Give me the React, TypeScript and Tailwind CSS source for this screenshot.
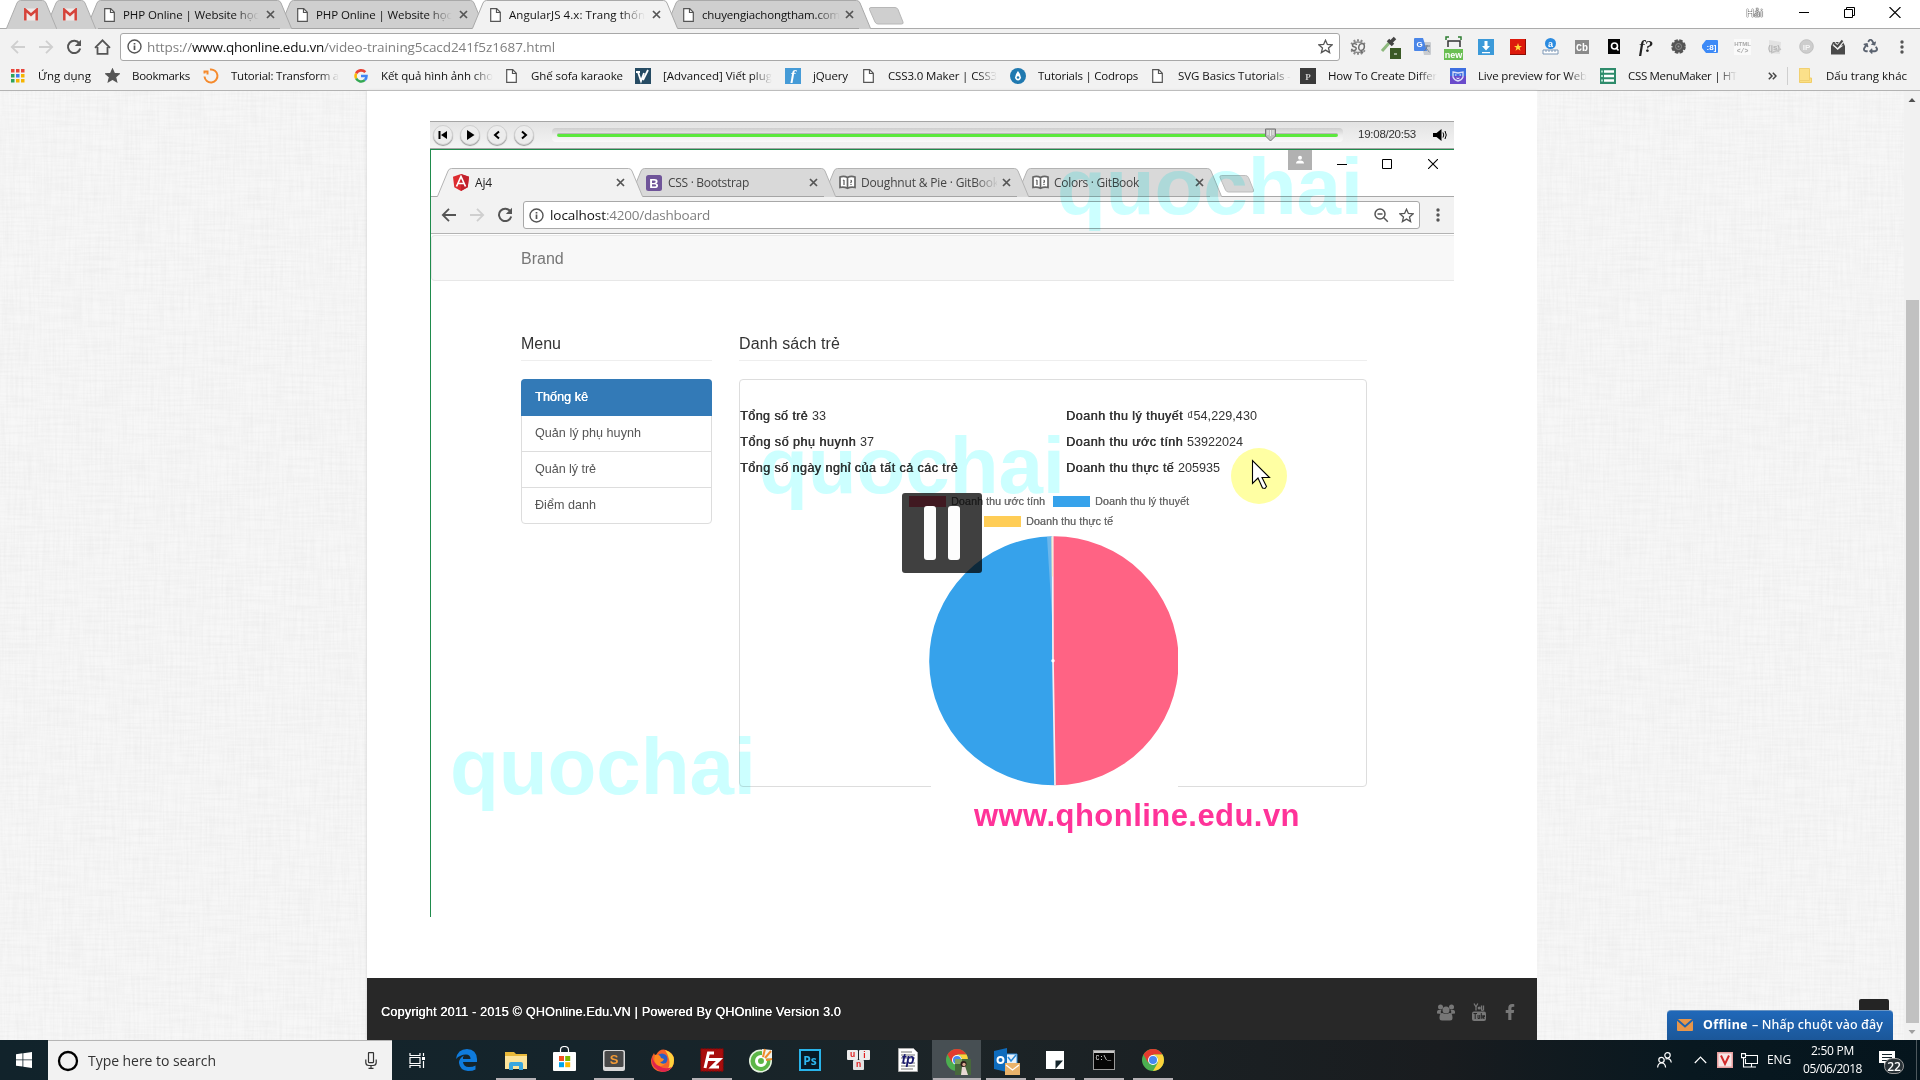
import React, { useLayoutEffect, useRef, useState } from "react";
import { FaFacebookF, FaRecycle } from "react-icons/fa";

/* Text run whose tracking is adjusted so that it fills a given width. */
function Fit({ w, className = "", children }: { w: number; className?: string; children: string }) {
  const ref = useRef<HTMLSpanElement>(null);
  const [ls, setLs] = useState(0);
  useLayoutEffect(() => {
    if (!ref.current) return;
    const natural = ref.current.getBoundingClientRect().width;
    setLs((w - natural) / Array.from(children).length);
  }, []);
  return (
    <span ref={ref} className={"inline-block shrink-0 whitespace-pre " + className} style={{ letterSpacing: ls }}>
      {children}
    </span>
  );
}

const ui = "font-['Open_Sans',sans-serif]";
const fade = "[mask-image:linear-gradient(to_right,black_82%,transparent)]";

function DocIcon() {
  return (
    <svg width="11" height="14" viewBox="0 0 11 14" fill="#fff" stroke="#555" strokeWidth="1.2" className="shrink-0">
      <path d="M.7.7h6l3.6 3.6v9H.7z" />
      <path d="M6.5.7v3.8h3.8" fill="none" />
    </svg>
  );
}
function Cross() {
  return (
    <svg width="9" height="9" viewBox="0 0 9 9" stroke="#555" strokeWidth="1.7" className="shrink-0">
      <path d="M1 1l7 7M8 1L1 8" />
    </svg>
  );
}
function Gmail() {
  return (
    <svg width="16" height="13" viewBox="0 0 16 13">
      <path d="M1 .5h14v12H1z" fill="#f0e9e7" />
      <path d="M2.300 12.500V1.800L8 6.800l5.700-5v10.700" fill="none" stroke="#d5433a" strokeWidth="2.500" />
    </svg>
  );
}

function TabShape({ w, fill, stroke }: { w: number; fill: string; stroke: string }) {
  return (
    <svg className="absolute inset-0" width={w} height="29" viewBox={`0 0 ${w} 29`}>
      <path d={`M.5 29V28.4L11 3Q12 .5 14.5 .5H${w - 14.5}Q${w - 12} .5 ${w - 11} 3L${w - 0.5} 28.4V29z`} fill={fill} />
      <path d={`M.5 28.4L11 3Q12 .5 14.5 .5H${w - 14.5}Q${w - 12} .5 ${w - 11} 3L${w - 0.5} 28.4`} fill="none" stroke={stroke} />
    </svg>
  );
}

function PinTab({ cls }: { cls: string }) {
  return (
    <div className={"relative flex h-[29px] w-[51px] shrink-0 items-center justify-center border-b border-[#a5a5a5] " + cls}>
      <TabShape w={51} fill="#cfcfcf" stroke="#adadad" />
      <div className="relative -ml-[2px]"><Gmail /></div>
    </div>
  );
}
function OuterTab({ cls, title, w, active }: { cls: string; title: string; w: number; active?: boolean }) {
  return (
    <div className={"relative flex h-[29px] w-[206px] shrink-0 items-center pl-[18px] " + cls}>
      <TabShape w={206} fill={active ? "#f2f2f2" : "#cfcfcf"} stroke="#a9a9a9" />
      {!active && <i className="absolute bottom-0 left-[12px] h-px w-[182px] bg-[#a5a5a5]" />}
      <div className="relative flex items-center">
        <DocIcon />
        <div className="ml-2 flex h-6 w-[138px] items-center overflow-hidden">
          <Fit w={w} className={"text-[11.5px] leading-[22px] text-[#111] " + fade}>{title}</Fit>
        </div>
        <span className="ml-[5px]"><Cross /></span>
      </div>
    </div>
  );
}

function WindowTabs() {
  return (
    <div className="relative flex h-[29px] shrink-0 border-b border-[#ababab] bg-white pl-[6px]">
      <PinTab cls="z-[9]" />
      <PinTab cls="z-[8] -ml-3" />
      <OuterTab cls="z-[7] -ml-[10px]" title="PHP Online | Website học" w={136} />
      <OuterTab cls="z-[6] -ml-[13px]" title="PHP Online | Website học" w={136} />
      <OuterTab cls="z-10 -ml-[13px]" title="AngularJS 4.x: Trang thốn" w={136} active />
      <OuterTab cls="z-[5] -ml-[13px]" title="chuyengiachongtham.com" w={138} />
      <svg width="36" height="18" viewBox="0 0 36 18" className="-ml-[3px] mt-[7px]">
        <path d="M3 .5h24q2 0 3 2l5 12.500q.7 2-1.500 2H10q-2 0-3-2L1.500 2.500Q1 .5 3 .5z" fill="#cfcfcf" stroke="#b7b7b7" />
      </svg>
      <div className="ml-auto flex items-center pb-[3px]">
        <span className="text-[11px] leading-none text-white [text-shadow:0_0_1px_#000,0_0_1px_#000,0_0_1px_#000]">Hải</span>
        <svg className="ml-9" width="11" height="11" viewBox="0 0 11 11" stroke="#000"><path d="M0 5.500h10" /></svg>
        <svg className="ml-[34px]" width="12" height="11" viewBox="0 0 12 11" fill="none" stroke="#000"><path d="M.5 2.500h8v8h-8zM2.500 2.500v-2h8v8h-2" /></svg>
        <svg className="ml-[33px] mr-[19px]" width="12" height="11" viewBox="0 0 12 11" stroke="#000" strokeWidth="1.100"><path d="M.5 0l11 11M11.500 0L.5 11" /></svg>
      </div>
    </div>
  );
}

function Arrow({ c, flip }: { c: string; flip?: boolean }) {
  return (
    <svg width="16" height="16" viewBox="0 0 16 16" fill="none" stroke={c} strokeWidth="1.800" className={flip ? "-scale-x-100" : ""}>
      <path d="M15 8H2M8 1.800L1.800 8 8 14.200" />
    </svg>
  );
}
function Reload() {
  return (
    <svg width="16" height="16" viewBox="0 0 16 16">
      <path d="M13.300 4.300A6.200 6.200 0 1 0 14.200 9.500" fill="none" stroke="#555" strokeWidth="2" />
      <path d="M15 .8V7H8.800z" fill="#555" />
    </svg>
  );
}
function Info() {
  return (
    <svg width="15" height="15" viewBox="0 0 15 15" fill="none" stroke="#555" strokeWidth="1.400">
      <circle cx="7.500" cy="7.500" r="6.500" /><path d="M7.500 6.500V11M7.500 4v1.500" strokeWidth="1.700" />
    </svg>
  );
}
function Star({ filled }: { filled?: boolean }) {
  return (
    <svg width="15" height="15" viewBox="0 0 15 15" fill={filled ? "#555" : "none"} stroke="#555" strokeWidth="1.300">
      <path d="M7.500 1.200l1.900 4.300 4.700.4-3.600 3.100 1.100 4.600-4.100-2.500-4.100 2.500L4.500 9 .9 5.900l4.700-.4z" />
    </svg>
  );
}
function Dots() {
  return (
    <svg width="4" height="14" viewBox="0 0 4 14" fill="#555"><circle cx="2" cy="2" r="1.700" /><circle cx="2" cy="7" r="1.700" /><circle cx="2" cy="12" r="1.700" /></svg>
  );
}

const extensions: React.ReactNode[] = [
  <svg width="16" height="16" viewBox="0 0 16 16"><path d="M2.500 5l-1.500-1M5 3L4 1M8 2.500V.3M11 3l1-2M13.500 5l1.500-1M2.500 11.500L1 12.500M5 13.300l-1 2M8 13.500v2.200M11 13.300l1 2M13.500 11.500l1.500 1" stroke="#8a8a8a" strokeWidth="2" /><path d="M3 4.500q5-3 10 0M3 12q5 3 10 0" fill="none" stroke="#8a8a8a" strokeWidth="1.300" /><text x="8" y="11.500" textAnchor="middle" fontSize="10" fontWeight="700" fontStyle="italic" fill="#6d6d6d" fontFamily="Liberation Sans">SQ</text></svg>,
  <svg width="22" height="24" viewBox="0 0 22 24"><path d="M3 16l8-9" stroke="#8eb97e" strokeWidth="3" /><path d="M9 5l5 5M12 7l4-4" stroke="#444" strokeWidth="3.500" /><rect x="11" y="13" width="11" height="11" fill="#3b5a26" /><path d="M15 19h3" stroke="#fff" /></svg>,
  <svg width="17" height="17" viewBox="0 0 17 17"><path d="M7 4h9q1 0 1 1v11q0 1-1 1H10z" fill="#c9ccd0" /><path d="M1 0h8l4 13H1q-1 0-1-1V1q0-1 1-1z" fill="#4a86e8" /><text x="5.500" y="9" textAnchor="middle" fontSize="8" fontWeight="700" fill="#fff" fontFamily="Liberation Sans">G</text><path d="M10 8h6M13 7v1q0 3-3 5M12 10q1 2 3.500 4" fill="none" stroke="#6f7d92" /></svg>,
  <svg width="20" height="26" viewBox="0 0 20 26" className="mt-[2px]"><path d="M2 5V2h3M14 2h3v3" fill="none" stroke="#2e7d32" strokeWidth="1.500" /><path d="M4 12V6h12v6" fill="none" stroke="#333" strokeWidth="1.500" /><rect y="14" width="19" height="11" fill="#6abf53" /><text x="9.500" y="22.500" textAnchor="middle" fontSize="9" fontWeight="700" fill="#fff" fontFamily="Liberation Sans">new</text></svg>,
  <svg width="16" height="16" viewBox="0 0 16 16"><rect width="16" height="16" fill="#3c9ad9" /><path d="M6.500 2h3v5H12L8 11.500 4 7h2.500zM4 13h8v1.200H4z" fill="#fff" /></svg>,
  <svg width="16" height="16" viewBox="0 0 16 16"><rect width="16" height="16" fill="#dd1a0c" /><path d="M0 15.500h16M15.500 0v16" stroke="#8d0d05" /><path d="M8 4l1 3h3L9.600 8.800l.9 3L8 10l-2.500 1.800.9-3L4 7h3z" fill="#ffd83b" /></svg>,
  <svg width="17" height="17" viewBox="0 0 17 17"><circle cx="8.500" cy="5.500" r="5.500" fill="#2b8be0" /><text x="8.500" y="8.500" textAnchor="middle" fontSize="9" fontWeight="700" fill="#fff" fontFamily="Liberation Sans">a</text><path d="M1 12h15v4H1z" fill="#fff" stroke="#7d97b5" /><path d="M4 12v2M7 12v2M10 12v2M13 12v2" stroke="#7d97b5" /></svg>,
  <svg width="14" height="14" viewBox="0 0 14 14"><rect width="14" height="14" fill="#8a8a8a" /><text x="7" y="10.500" textAnchor="middle" fontSize="10" fontWeight="700" fill="#fff" fontFamily="Liberation Mono">Cb</text></svg>,
  <svg width="12" height="15" viewBox="0 0 12 15"><rect width="12" height="15" fill="#050505" /><circle cx="6.500" cy="7" r="3" fill="none" stroke="#fff" strokeWidth="1.600" /><path d="M8 8.500l2.500 3" stroke="#fff" strokeWidth="1.600" /></svg>,
  <span className="font-['Liberation_Serif',serif] text-[17px] font-bold italic leading-none text-[#222]">f?</span>,
  <svg width="15" height="15" viewBox="0 0 15 15"><circle cx="7.500" cy="7.500" r="6" fill="#555" /><circle cx="7.500" cy="7.500" r="6.300" fill="none" stroke="#555" strokeWidth="2" strokeDasharray="3.500 1.450" /><circle cx="7.500" cy="7.500" r="3" fill="none" stroke="#8e8e8e" /><circle cx="7.500" cy="7.500" r="1" fill="#999" /></svg>,
  <svg width="16" height="13" viewBox="0 0 16 13"><path d="M4 0h11q1 0 1 1v11q0 1-1 1H4L0 8V5z" fill="#3d8af7" /><text x="9.500" y="9.500" textAnchor="middle" fontSize="8" fontWeight="700" fill="#fff" fontFamily="Liberation Sans">:8]</text></svg>,
  <svg width="17" height="16" viewBox="0 0 17 16"><rect width="17" height="16" fill="#fafafa" /><text x="8.500" y="6.500" textAnchor="middle" fontSize="6" fontWeight="700" fill="#a7a7a7" fontFamily="Liberation Sans">HTML</text><text x="8.500" y="13.500" textAnchor="middle" fontSize="6.500" fontWeight="700" fill="#a7a7a7" fontFamily="Liberation Mono">&lt;/&gt;</text></svg>,
  <svg width="17" height="16" viewBox="0 0 17 16"><path d="M3 1l12 2-1 12-11-1z" fill="#e2e2e2" /><text x="8" y="10.500" textAnchor="middle" fontSize="8" fontWeight="700" fill="#b3b3b3" fontFamily="Liberation Sans">(js)</text><path d="M5 14l10-4" stroke="#c4c4c4" strokeWidth="1.500" /></svg>,
  <svg width="15" height="15" viewBox="0 0 15 15"><circle cx="7.500" cy="7.500" r="6.800" fill="#cdcdcd" stroke="#c0c0c0" /><text x="7.500" y="10.500" textAnchor="middle" fontSize="8" fontWeight="700" fill="#f5f5f5" fontFamily="Liberation Sans">IP</text></svg>,
  <svg width="16" height="16" viewBox="0 0 16 16"><path d="M1 7l2-4h10l2 4v8.500H1z" fill="#4a4a4a" /><path d="M2.500 6.500h11L8 10.500z" fill="#f2f2f2" /><path d="M4 4.500L7.500 8 13 1" fill="none" stroke="#f2f2f2" strokeWidth="4" /><path d="M4 4.500L7.500 7.500 12.500 1.500" fill="none" stroke="#4a4a4a" strokeWidth="2" /></svg>,
  <FaRecycle size={15} color="#5b6370" />,
];

function AddressBar() {
  return (
    <div className="flex h-[35px] shrink-0 items-center bg-[#f2f2f2]">
      <div className="flex w-[120px] shrink-0 items-center gap-3 pl-[10px]">
        <Arrow c="#cfcfcf" /><Arrow c="#cfcfcf" flip /><Reload />
        <svg width="17" height="16" viewBox="0 0 17 16" fill="none" stroke="#555" strokeWidth="1.800"><path d="M3.500 8v6.800h10V8M1 8.800L8.500 1.300 16 8.800" /></svg>
      </div>
      <div className="flex h-[28px] w-[1220px] shrink-0 items-center rounded-[3px] border border-[#a8a8a8] bg-white pl-[6px] pr-[6px]">
        <Info />
        <div className="ml-[5px] flex pt-[2px] text-[13.500px] leading-none text-[#7f7f7f]">
          <Fit w={45}>https://</Fit>
          <Fit w={132} className="text-[#111]">www.qhonline.edu.vn</Fit>
          <Fit w={231}>/video-training5cacd241f5z1687.html</Fit>
        </div>
        <span className="ml-auto"><Star /></span>
      </div>
      <div className="flex pl-[2px]">
        {extensions.map((e, i) => (
          <div key={i} className="flex h-[26px] w-8 items-center justify-center">{e}</div>
        ))}
        <div className="flex h-[26px] w-8 items-center justify-center"><Dots /></div>
      </div>
    </div>
  );
}

const sq = (bg: string, t: string, extra: Record<string, string> = {}) => (
  <svg width="16" height="16" viewBox="0 0 16 16"><rect width="16" height="16" fill={bg} /><text x="8" y="12" textAnchor="middle" fontSize="12" fontWeight="700" fill="#fff" fontFamily="Liberation Serif" {...extra}>{t}</text></svg>
);

const bookmarks: { cls: string; ic: string; icon: React.ReactNode; t: string; w: number; f?: boolean }[] = [
  { cls: "w-[94px]", ic: "w-[27px]", t: "Ứng dụng", w: 53, icon: <svg width="14" height="14" viewBox="0 0 14 14">{["#e8453c", "#e8453c", "#e8453c", "#2fa35b", "#3f7df0", "#f5b400", "#2fa35b", "#f5b400", "#f5b400"].map((c, i) => <rect key={i} x={(i % 3) * 5} y={Math.floor(i / 3) * 5} width="3.500" height="3.500" fill={c} />)}</svg> },
  { cls: "w-[98px]", ic: "w-[27px]", t: "Bookmarks", w: 58, icon: <Star filled /> },
  { cls: "w-[151px]", ic: "w-[28px]", t: "Tutorial: Transform a", w: 108, f: true, icon: <svg width="16" height="16" viewBox="0 0 16 16" fill="none" stroke="#f58a2c" strokeWidth="2"><path d="M7 1.500a6.500 6.500 0 1 1-5.500 7M1.500 2.500v3M1.500 3.500h3v3" /></svg> },
  { cls: "w-[152px]", ic: "w-[27px]", t: "Kết quả hình ảnh cho", w: 112, f: true, icon: <svg width="14" height="14" viewBox="0 0 14 14" fill="none" strokeWidth="2.600"><path d="M11.300 3.200A5.500 5.500 0 0 0 2.200 4.500" stroke="#ea4335" /><path d="M2.200 4.500a5.500 5.500 0 0 0 0 5" stroke="#fbbc05" /><path d="M2.200 9.500a5.500 5.500 0 0 0 8.600 1.600" stroke="#34a853" /><path d="M10.800 11.100A5.500 5.500 0 0 0 12.500 7H7" stroke="#4285f4" /></svg> },
  { cls: "w-[129px]", ic: "w-[25px]", t: "Ghế sofa karaoke", w: 92, icon: <DocIcon /> },
  { cls: "w-[150px]", ic: "w-[28px]", t: "[Advanced] Viết plug", w: 109, f: true, icon: <svg width="16" height="16" viewBox="0 0 16 16"><rect width="16" height="16" fill="#264b63" /><path d="M1 4h4M3 4l3 9 3-8M8 12l5-10" fill="none" stroke="#fff" strokeWidth="1.800" /></svg> },
  { cls: "w-[78px]", ic: "w-[28px]", t: "jQuery", w: 35, icon: sq("#459bd7", "f", { fontStyle: "italic", fontSize: "15" }) },
  { cls: "w-[147px]", ic: "w-[25px]", t: "CSS3.0 Maker | CSS3", w: 109, f: true, icon: <DocIcon /> },
  { cls: "w-[142px]", ic: "w-[28px]", t: "Tutorials | Codrops", w: 100, icon: <svg width="16" height="16" viewBox="0 0 16 16"><circle cx="8" cy="8" r="8" fill="#2079b0" /><path d="M8 3q4 5 2.500 8-2.500 3-5 0Q4 8 8 3z" fill="#fff" /><circle cx="8" cy="9.500" r="1.300" fill="#2079b0" /></svg> },
  { cls: "w-[148px]", ic: "w-[26px]", t: "SVG Basics Tutorials -", w: 113, f: true, icon: <DocIcon /> },
  { cls: "w-[150px]", ic: "w-[28px]", t: "How To Create Differ", w: 109, f: true, icon: sq("#3a3a3a", "P", { fontSize: "9", fill: "#ccc" }) },
  { cls: "w-[150px]", ic: "w-[28px]", t: "Live preview for Web", w: 109, f: true, icon: <svg width="16" height="16" viewBox="0 0 16 16"><path d="M0 0h16v8H0z" fill="#3e6fe0" /><path d="M0 8h16v8H0z" fill="#6a4bcb" /><path d="M3 4l5 1 5-1v5q-1 3-5 4-4-1-5-4z" fill="none" stroke="#d9def8" strokeWidth="1.300" /><path d="M5 7h1.500M9.500 7H11M6.500 10q1.500 1 3 0" stroke="#fff" fill="none" /></svg> },
  { cls: "w-[160px]", ic: "w-[28px]", t: "CSS MenuMaker | HT", w: 109, f: true, icon: <svg width="16" height="16" viewBox="0 0 16 16"><rect width="16" height="16" fill="#2e8b6b" /><path d="M4 3.500h10M4 8h10M4 12.500h10" stroke="#fff" strokeWidth="2.400" /><path d="M1 3.500h2M1 8h2M1 12.500h2" stroke="#a9e0cb" strokeWidth="2" /></svg> },
];

function BookmarkBar() {
  return (
    <div className="flex h-[27px] shrink-0 items-center border-b border-[#b3b3b3] bg-[#f2f2f2] pb-[3px] pl-[11px] text-[11.500px] leading-5 text-[#111]">
      {bookmarks.map((b) => (
        <div key={b.t} className={"flex shrink-0 items-center " + b.cls}>
          <span className={"shrink-0 " + b.ic}>{b.icon}</span>
          <Fit w={b.w} className={b.f ? fade : ""}>{b.t}</Fit>
        </div>
      ))}
      <svg width="9" height="8" viewBox="0 0 9 8" fill="none" stroke="#444" strokeWidth="1.500" className="ml-[8px]"><path d="M.8.8L4 4 .8 7.200M4.800.8L8 4 4.800 7.200" /></svg>
      <i className="ml-[10px] h-[18px] w-px bg-[#cfcfcf]" />
      <svg width="13" height="15" viewBox="0 0 13 15" className="ml-[11px]"><path d="M.5.5h8.500v9.500h3.500v4.500H.5z" fill="#fbdf83" stroke="#f0cd68" /><path d="M.5.5h10v12H.5z" fill="#fbe08a" stroke="#f1d071" /></svg>
      <span className="ml-[14px]"><Fit w={81}>Dấu trang khác</Fit></span>
    </div>
  );
}

/* Faint woven-linen backdrop on both sides of the content column. */
function Linen() {
  return (
    <svg className="h-full w-full" preserveAspectRatio="none">
      <filter id="weft"><feTurbulence type="fractalNoise" baseFrequency="0.025 0.45" numOctaves="2" seed="4" /><feColorMatrix values="0 0 0 0 .45  0 0 0 0 .45  0 0 0 0 .45  .16 0 0 0 -.055" /></filter>
      <filter id="warp"><feTurbulence type="fractalNoise" baseFrequency="0.45 0.025" numOctaves="2" seed="9" /><feColorMatrix values="0 0 0 0 .45  0 0 0 0 .45  0 0 0 0 .45  .16 0 0 0 -.055" /></filter>
      <rect width="100%" height="100%" fill="#f7f7f7" />
      <rect width="100%" height="100%" filter="url(#weft)" />
      <rect width="100%" height="100%" filter="url(#warp)" />
    </svg>
  );
}

function RoundBtn({ children }: { children: React.ReactNode }) {
  return (
    <span className="flex h-[20px] w-[20px] items-center justify-center rounded-full border border-[#d0d0d0] bg-[#ececec] shadow-[0_1px_1px_#999]">
      <svg width="12" height="12" viewBox="0 0 12 12">{children}</svg>
    </span>
  );
}
function PlayerBar() {
  return (
    <div className="flex h-[28px] shrink-0 items-center border-b border-t border-[#a5a5a5] bg-gradient-to-b from-[#e3e3e3] to-[#f4f4f4] pb-px pl-[3px]">
      <div className="flex gap-[7px]">
        <RoundBtn><path d="M1.500 2h2v8h-2zM10 2v8L4 6z" /></RoundBtn>
        <RoundBtn><path d="M3 1v10L10.500 6z" /></RoundBtn>
        <RoundBtn><path d="M8 2.500L4 6l4 3.500" fill="none" stroke="#000" strokeWidth="2" /></RoundBtn>
        <RoundBtn><path d="M4 2.500L8 6 4 9.500" fill="none" stroke="#000" strokeWidth="2" /></RoundBtn>
      </div>
      <div className="relative ml-[18px] flex h-[14px] w-[791px] items-center rounded-sm bg-gradient-to-b from-[#cdcdcd] via-[#ececec] to-[#fafafa] px-[5px]">
        <i className="h-[4px] w-full rounded-full border-t border-[#b9b9b9] bg-[#5be83d]" />
        <svg className="absolute left-[713px] top-0" width="12" height="14" viewBox="0 0 12 14"><path d="M.5 1h10v7L5.500 13 .5 8z" fill="#bdbdbd" stroke="#777" /><path d="M3 2v5M5.500 2v6M8 2v5" stroke="#eee" /></svg>
      </div>
      <span className="ml-[15px] font-['Liberation_Sans',sans-serif] text-[11.500px] leading-none text-[#333]"><Fit w={58}>19:08/20:53</Fit></span>
      <svg width="15" height="14" viewBox="0 0 15 14" className="ml-[17px]"><path d="M0 5h3.500L8.500 1v12L3.500 9H0z" /><path d="M10 4.500q1.500 2.500 0 5M12 3q2.500 4 0 8" fill="none" stroke="#000" /></svg>
    </div>
  );
}

const book = (
  <svg width="17" height="15" viewBox="0 0 17 15" fill="#fff" stroke="#666" strokeWidth="1.700"><path d="M1 2q4-1.500 7.500.5Q12 .5 16 2v10.500q-4-1-7.500.8Q5 11.500 1 12.500zM8.500 2.500v10.500" /><path d="M4 5l1.500 1M5 5v5M11.500 5.500q2 0 0 2.500M12 9v1" strokeWidth="1.300" fill="none" /></svg>
);
const innerTabs = [
  { t: "Aj4", w: 17, z: "z-10", icon: <svg width="16" height="17" viewBox="0 0 16 17"><path d="M8 0l8 2.800-1.300 10.500L8 17l-6.700-3.700L0 2.800z" fill="#dd2c30" /><path d="M8 0l8 2.800-1.300 10.500L8 17z" fill="#c2202c" /><path d="M3.500 12.500L8 2.500l4.500 10M5.500 9.500h5" fill="none" stroke="#fff" strokeWidth="1.700" /></svg> },
  { t: "CSS · Bootstrap", w: 81, z: "z-[9]", icon: <svg width="16" height="16" viewBox="0 0 16 16"><rect width="16" height="16" rx="2.500" fill="#6f5499" /><text x="8" y="12.500" textAnchor="middle" fontSize="13" fontWeight="700" fill="#fff" fontFamily="Liberation Sans">B</text></svg> },
  { t: "Doughnut & Pie · GitBook", w: 138, z: "z-[8]", icon: book },
  { t: "Colors · GitBook", w: 85, z: "z-[7]", icon: book },
];

function InnerBrowser() {
  return (
    <>
      <div className="relative flex h-[47px] border-b border-[#a8a8a8] bg-white pl-[6px]">
        <div className="mt-[18px] flex">
          {innerTabs.map((tab, i) => (
            <div key={tab.t} className={"relative flex h-[29px] w-[206px] items-center pl-4 " + tab.z + (i ? " -ml-[13px]" : "")}>
              <TabShape w={206} fill={i ? "#d9d9d9" : "#f2f2f2"} stroke="#b3b3b3" />
              {i > 0 && <i className="absolute bottom-0 left-[12px] h-px w-[182px] bg-[#a5a5a5]" />}
              <div className="relative flex items-center">
                <span className="w-[17px]">{tab.icon}</span>
                <div className="ml-[5px] flex h-6 w-[136px] items-center overflow-hidden">
                  <Fit w={tab.w} className={"text-[12px] leading-[22px] " + (i ? "text-[#444] " : "text-[#222] ") + (i === 2 ? fade : "")}>{tab.t}</Fit>
                </div>
                <span className="ml-[5px]"><Cross /></span>
              </div>
            </div>
          ))}
          <svg width="37" height="18" viewBox="0 0 36 18" className="-ml-[4px] mt-[7px]"><path d="M3 .5h24q2 0 3 2l5 12.500q.7 2-1.500 2H10q-2 0-3-2L1.500 2.500Q1 .5 3 .5z" fill="#d6d6d6" stroke="#bdbdbd" /></svg>
        </div>
        <div className="ml-auto flex items-start pr-[16px]">
          <span className="flex h-5 w-6 items-center justify-center bg-[#b1b1b1]">
            <svg width="10" height="10" viewBox="0 0 10 10" fill="#fff"><circle cx="5" cy="2.800" r="2" /><path d="M1 8.500q0-3 4-3t4 3z" /></svg>
          </span>
          <svg className="ml-[25px] mt-[9px]" width="10" height="11" viewBox="0 0 10 11" stroke="#000"><path d="M0 5.500h10" /></svg>
          <svg className="ml-[35px] mt-[9px]" width="10" height="10" viewBox="0 0 10 10" fill="none" stroke="#000"><path d="M.5.5h9v9h-9z" /></svg>
          <svg className="ml-[36px] mt-[9px]" width="10" height="10" viewBox="0 0 10 10" stroke="#000" strokeWidth="1.100"><path d="M0 0l10 10M10 0L0 10" /></svg>
        </div>
      </div>
      <div className="flex h-[37px] items-center border-b border-[#b3b3b3] bg-[#f2f2f2]">
        <div className="flex w-[92px] shrink-0 items-center gap-3 pl-[10px]"><Arrow c="#555" /><Arrow c="#cfcfcf" flip /><Reload /></div>
        <div className="flex h-[28px] w-[897px] shrink-0 items-center rounded-[3px] border border-[#a8a8a8] bg-white pl-[5px] pr-[5px]">
          <Info />
          <div className="ml-[6px] flex pt-px text-[13.500px] leading-none text-[#7f7f7f]">
            <Fit w={56} className="text-[#111]">localhost</Fit>
            <Fit w={104}>:4200/dashboard</Fit>
          </div>
          <svg className="ml-auto mr-[10px]" width="15" height="15" viewBox="0 0 15 15" fill="none" stroke="#555" strokeWidth="1.500"><circle cx="6" cy="6" r="5" /><path d="M9.800 9.800l4 4M3.500 6h5" /></svg>
          <Star />
        </div>
        <span className="ml-[16px]"><Dots /></span>
      </div>
    </>
  );
}

function LegendItem({ box, t, w }: { box: string; t: string; w: number }) {
  return (
    <span className="flex items-center gap-[5px]">
      <i className={"h-[11px] w-[37px] " + box} />
      <Fit w={w} className="[text-shadow:0.3px_0_0_#888]">{t}</Fit>
    </span>
  );
}

function Dashboard() {
  const menu = [["Quản lý phụ huynh", 106], ["Quản lý trẻ", 61], ["Điểm danh", 61]] as [string, number][];
  return (
    <div className="font-['Liberation_Sans',sans-serif] text-[12.600px] text-[#333]">
      <div className="mt-px flex h-[46px] items-center rounded-l border border-r-0 border-[#e7e7e7] bg-[#f8f8f8] pl-[89px] pt-px text-[16px] text-[#777]">Brand</div>
      <div className="flex gap-[27px] pl-[90px] pt-[50px]">
        <div className="w-[191px]">
          <h4 className="h-[30px] border-b border-[#eee] text-[16px] leading-[25px]"><Fit w={40}>Menu</Fit></h4>
          <div className="mt-[18px] rounded border border-[#ddd] text-[#555]">
            <div className="-mx-px -mt-px h-[37px] rounded-t bg-[#337ab7] pl-[14px] leading-[36px] text-white"><Fit w={53} className="[text-shadow:0.4px_0_0_#fff]">Thống kê</Fit></div>
            {menu.map(([t, w], i) => (
              <div key={t} className={"pl-[13px] leading-[34px] " + (i < 2 ? "h-9 border-b border-[#ddd]" : "h-[35px]")}><Fit w={w}>{t}</Fit></div>
            ))}
          </div>
        </div>
        <div className="w-[628px]">
          <h4 className="h-[30px] border-b border-[#eee] text-[16px] leading-[25px]"><Fit w={101}>Danh sách trẻ</Fit></h4>
          <div className="mt-[18px] h-[408px] rounded border border-[#ddd] pt-[23px]">
            <div className="flex leading-[26px] [&_b]:font-normal [&_b]:[text-shadow:0.5px_0_0_#333]">
              <div className="flex w-[326px] flex-col">
                <div className="flex gap-[4px]"><b><Fit w={68}>Tổng số trẻ</Fit></b><span>33</span></div>
                <div className="flex gap-[4px]"><b><Fit w={116}>Tổng số phụ huynh</Fit></b><span>37</span></div>
                <div><b><Fit w={218}>Tổng số ngày nghỉ của tất cả các trẻ</Fit></b></div>
              </div>
              <div className="flex flex-col">
                <div className="flex gap-[4px]"><b><Fit w={117}>Doanh thu lý thuyết</Fit></b><Fit w={70}>₫54,229,430</Fit></div>
                <div className="flex gap-[4px]"><b><Fit w={117}>Doanh thu ước tính</Fit></b><Fit w={56}>53922024</Fit></div>
                <div className="flex gap-[4px]"><b><Fit w={108}>Doanh thu thực tế</Fit></b><Fit w={42}>205935</Fit></div>
              </div>
            </div>
            <div className="mt-[10px] flex flex-col pl-[169px] text-[10.800px] text-[#666]">
              <div className="flex h-5 items-center gap-[8px]">
                <LegendItem box="bg-[#ff6384]" t="Doanh thu ước tính" w={94} />
                <LegendItem box="bg-[#36a2eb]" t="Doanh thu lý thuyết" w={94} />
              </div>
              <div className="flex h-5 items-center pl-[75px]"><LegendItem box="bg-[#ffcd56]" t="Doanh thu thực tế" w={87} /></div>
            </div>
            <div className="ml-[191px] mt-[5px] h-[252px] w-[247px] bg-white">
              <svg width="250" height="250" viewBox="0 0 250 250" className="-ml-[3px] max-w-none">
                <path d="M125.300.3A124.500 124.500 0 0 1 127 249.300L125 124.800z" fill="#ff6384" />
                <path d="M124.500.3A124.500 124.500 0 1 0 127 249.300L125 124.800z" fill="#36a2eb" />
                <path d="M119 .6h5l.6 90z" fill="#9fc9ec" opacity=".5" />
                <path d="M124.500.3L125 124.800 127 249.300" fill="none" stroke="#f4eff3" strokeWidth="1.700" />
                <path d="M123.900.5l.5 40" stroke="#f7e5b0" strokeWidth=".8" />
                <circle cx="125" cy="124.800" r="1.700" fill="#fff" />
              </svg>
            </div>
          </div>
        </div>
      </div>
    </div>
  );
}

function Watermark({ cls }: { cls: string }) {
  return <div className={"absolute z-20 font-['Liberation_Sans',sans-serif] text-[80px] font-bold leading-none text-[#ccffff] mix-blend-multiply " + cls}><Fit w={306}>quochai</Fit></div>;
}

function Footer() {
  return (
    <div className="mt-auto flex h-[62px] items-center bg-[#282828] pl-[14px] pr-[19px] pt-[6px] font-['Liberation_Sans',sans-serif] text-[12.600px] text-white">
      <Fit w={460} className="[text-shadow:0.3px_0_0_#fff]">Copyright 2011 - 2015 © QHOnline.Edu.VN | Powered By QHOnline Version 3.0</Fit>
      <div className="ml-auto flex items-center gap-[17px] text-[#777]">
        <svg width="18" height="17" viewBox="0 0 18 17" fill="#777"><circle cx="3.500" cy="3" r="2.500" /><circle cx="14.500" cy="3" r="2.500" /><path d="M0 9.500q-.3-3.500 1.500-3.500h3q-1.500 2 0 4zM18 9.500q.3-3.500-1.500-3.500h-3q1.500 2 0 4z" /><circle cx="9" cy="6" r="3.500" /><path d="M2.500 14q0-5 3-5 3.500 2 7 0 3 0 3 5 0 2.500-2.500 2.500H5q-2.500 0-2.500-2.500z" /></svg>
        <svg width="14" height="18" viewBox="0 0 14 18" fill="#777"><path d="M2 .5l2 3.500L5.800.5M4 4v3.500M11.500 2.500v4.500q-2 .8-2-.5v-4" fill="none" stroke="#777" strokeWidth="1.300" /><circle cx="7.200" cy="5" r="1.600" /><rect y="8.500" width="14" height="9.500" rx="2" /><path d="M1.500 10.500h3.500M3.200 10.500v5.500M6 12v3.500h1.700V12M9.300 10v5.800M9.300 12.500h1v3M12.500 15.500h-1v-3h1v1.500h-1" fill="none" stroke="#282828" /></svg>
        <FaFacebookF size={16} className="-ml-px" />
      </div>
    </div>
  );
}

function Page() {
  return (
    <div className="flex min-h-0 flex-1 bg-white">
      <div className="w-[367px] shrink-0"><Linen /></div>
      <div className="flex w-[1170px] shrink-0 flex-col bg-white shadow-[0_0_3px_#ccc]">
        <div className="ml-[63px] mt-[30px] w-[1024px]">
          <PlayerBar />
          <div className="h-[768px] overflow-hidden border-l border-t border-[#1f8b4c]">
            <InnerBrowser />
            <Dashboard />
          </div>
        </div>
        <Footer />
      </div>
      <div className="min-w-0 flex-1"><Linen /></div>
      <div className="flex w-[16px] shrink-0 flex-col items-center bg-[#f1f1f1]">
        <svg width="16" height="17" viewBox="0 0 16 17"><path d="M8 7l3.500 4h-7z" fill="#505050" /></svg>
        <i className="mt-[192px] h-[723px] w-[13px] bg-[#c1c1c1]" />
        <svg width="16" height="17" viewBox="0 0 16 17"><path d="M8 11l3.500-4h-7z" fill="#a0a0a0" /></svg>
      </div>
    </div>
  );
}

const chrome = (
  <svg width="22" height="22" viewBox="0 0 22 22"><circle cx="11" cy="11" r="11" fill="#4caf50" /><path d="M1.500 5.500A11 11 0 0 1 20.500 5.500H11L6.200 13.700z" fill="#e33b2e" /><path d="M20.500 5.500A11 11 0 0 1 11 22L15.800 13.700 15.500 8 11 5.500z" fill="#fdd23b" /><circle cx="11" cy="11" r="5" fill="#fff" /><circle cx="11" cy="11" r="4" fill="#4688f1" /></svg>
);

const apps: { icon: React.ReactNode; bar?: string; bg?: string }[] = [
  { icon: <svg width="17" height="17" viewBox="0 0 17 17" fill="none" stroke="#fff" strokeWidth="1.200"><path d="M1 1v2.500h10V1M1 16v-2.500h10V16M1 5.500h10v6H1zM14.500 1v3M14.500 9v7" /><path d="M13 5h3v3h-3z" fill="#fff" stroke="none" /></svg> },
  { icon: <svg width="21" height="22" viewBox="0 0 21 22"><path d="M0 10Q1.500 0 11 0q9.500.5 10 10v3H7q.5 5 6 5 4 0 6.500-1.500v4Q17 22 12 22 4 21.500 3 14q0-5 5-7.500Q6.500 8 7 10h7.500q0-4.500-4.500-4.500Q4 5.500 0 10z" fill="#0f7bdc" /></svg> },
  { icon: <svg width="22" height="19" viewBox="0 0 22 19"><path d="M0 1h9l2 2h11v15H0z" fill="#e9b93a" /><path d="M0 5h22v13H0z" fill="#fde49b" /><path d="M4 19v-6q0-2 2-2h10q2 0 2 2v6h-4v-4H8v4z" fill="#3aa7df" /></svg>, bar: "w-10" },
  { icon: <svg width="23" height="25" viewBox="0 0 23 25" className="-mt-1"><path d="M7.500 7V4q0-3.500 4-3.500t4 3.500v3" fill="none" stroke="#fff" strokeWidth="1.200" /><rect y="6" width="23" height="19" rx="1" fill="#fff" /><path d="M6 10h5v5H6z" fill="#f25022" /><path d="M12.200 10h5v5h-5z" fill="#7fba00" /><path d="M6 16.200h5v5H6z" fill="#00a4ef" /><path d="M12.200 16.200h5v5h-5z" fill="#ffb900" /></svg> },
  { icon: <svg width="22" height="21" viewBox="0 0 22 21"><rect width="22" height="21" rx="2" fill="#d8d8d8" /><rect x="1.500" y="1" width="19" height="16" rx="1.500" fill="#494949" /><text x="11" y="13.500" textAnchor="middle" fontSize="13" fontWeight="700" fill="#f39a35" fontFamily="Liberation Sans">S</text></svg>, bar: "w-10" },
  { icon: <svg width="23" height="23" viewBox="0 0 23 23"><path d="M3 4q0 2 2 2Q9-1 15 1q8 3 8 10 0 11-11.500 12Q0 22 0 11q1-4 3-7z" fill="#f5622a" /><path d="M14 1q9 3 9 10 0 9-8 11 5-5 3-12-1-5-4-9z" fill="#ffd23c" /><path d="M1 7Q-1 20 12 23q6-.5 9-5-7 3-13-1Q2 14 1 7z" fill="#e0234e" /><circle cx="11" cy="10" r="5.500" fill="#2b5fc4" /><path d="M4 6q5-1 6 3l3 1q-1 3-4 3 2 3 6 1-4 5-9 2-4-4-2-10z" fill="#ff8a1e" /></svg> },
  { icon: <svg width="24" height="24" viewBox="0 0 24 24"><rect x=".8" y=".8" width="22.400" height="22.400" fill="#a80d0d" stroke="#7d0808" strokeDasharray="2 1" /><path d="M5 20L8.500 5H14M7 11.500h5M11.500 11.500h8L12 19h7" fill="none" stroke="#fff" strokeWidth="3" /></svg>, bar: "w-10" },
  { icon: <svg width="24" height="25" viewBox="0 0 24 25"><circle cx="11.500" cy="13" r="11.500" fill="#e8f5e2" /><circle cx="11.500" cy="13" r="10" fill="#5cb647" /><circle cx="12" cy="13" r="4.500" fill="none" stroke="#fff" strokeWidth="3" /><path d="M13 10V1l10 1v9z" fill="#f1f4ee" /><path d="M14 9l2-8M16 10l6-7M17 12l6-1" stroke="#ef8b2c" strokeWidth="2" /></svg> },
  { icon: <svg width="22" height="22" viewBox="0 0 22 22"><rect x="1" y="1" width="20" height="20" fill="#071a26" stroke="#29b4ea" strokeWidth="2" /><text x="11" y="15.500" textAnchor="middle" fontSize="12" fontWeight="700" fill="#2eb6ee" fontFamily="Open Sans">Ps</text></svg> },
  { icon: <svg width="23" height="20" viewBox="0 0 23 20" fontFamily="Liberation Sans" fontWeight="700" fontSize="8.500" fill="#e02020" textAnchor="middle"><rect width="11" height="10" rx="1" fill="#ececec" /><rect x="12" width="11" height="10" rx="1" fill="#ececec" /><rect x="6" y="10" width="11" height="10" rx="1" fill="#e3e3e3" /><text x="5.500" y="7">u</text><text x="17.500" y="8">i</text><text x="11.500" y="17">n</text></svg> },
  { icon: <svg width="20" height="24" viewBox="0 0 20 24"><path d="M.5.5h15l4 4v19H.5z" fill="#fff" stroke="#aaa" /><path d="M3 4h11M3 7h14M3 10h14M3 15h14M3 18h14M3 21h12" stroke="#777" /><text x="10" y="16" textAnchor="middle" fontSize="14" fontWeight="700" fontStyle="italic" fill="#1a1a70" fontFamily="Liberation Sans">tp</text></svg> },
  { icon: <span className="relative">{chrome}<svg className="absolute left-[9px] top-[10px]" width="16" height="16" viewBox="0 0 16 16"><rect width="16" height="16" fill="#47683c" /><path d="M0 0h7v5H0z" fill="#7fa35e" /><path d="M6 16l1-8 3-1 3 9z" fill="#e9d9d6" /><circle cx="8.500" cy="5" r="3" fill="#2d1d1a" /><circle cx="9" cy="5.500" r="1.700" fill="#d8a78f" /></svg></span>, bar: "w-12", bg: "bg-[#474f53]" },
  { icon: <svg width="26" height="27" viewBox="0 0 26 27" className="ml-[3px] mt-[2px]"><path d="M12 6h11v12H12z" fill="#e8f1fa" stroke="#2b8bd8" /><path d="M0 3l13-3v24L0 21z" fill="#0f6cbd" /><circle cx="6.500" cy="12" r="3" fill="none" stroke="#fff" strokeWidth="2" /><path d="M14 9l3 4 5-6" fill="none" stroke="#2b8bd8" strokeWidth="1.500" /><rect x="11" y="15" width="15" height="12" fill="#eab36b" /><path d="M12 17l6.500 5 6.500-5" fill="none" stroke="#fff" strokeWidth="1.300" /></svg>, bar: "w-10" },
  { icon: <svg width="18" height="18" viewBox="0 0 18 18"><path d="M0 0h18v18H0z" fill="#fff" /><path d="M9.500 18v-8.500H17z" fill="#14242b" /></svg>, bar: "w-10" },
  { icon: <svg width="22" height="20" viewBox="0 0 22 20"><rect x=".5" y=".5" width="21" height="19" fill="#050505" stroke="#9a9a9a" /><path d="M1 2h20" stroke="#c9c9c9" strokeWidth="2" /><text x="2.500" y="9.500" fontSize="6.500" fill="#fff" fontFamily="Liberation Mono">C:\_</text></svg>, bar: "w-10" },
  { icon: chrome, bar: "w-10" },
];

function Taskbar() {
  return (
    <div className="flex h-10 shrink-0 items-center bg-[linear-gradient(to_right,#11232b,#15242b_30%,#1c2427_50%,#191c1f_75%,#081820_88%,#05151d)] text-white">
      <div className="flex w-12 shrink-0 justify-center"><svg width="16" height="16" viewBox="0 0 16 16" fill="#fff"><path d="M0 2.200l6.500-.9v6.200H0zM7.300 1.200L16 0v7.500H7.300zM0 8.300h6.500v6.300L0 13.700zM7.300 8.300H16V16l-8.700-1.200z" /></svg></div>
      <div className="flex h-10 w-[344px] shrink-0 items-center border-t border-[#b5b5b5] bg-[#f2f2f2] pl-[9px] pr-[15px] text-[#333]">
        <svg width="22" height="22" viewBox="0 0 22 22" fill="none" stroke="#000" strokeWidth="2.300"><circle cx="11" cy="11" r="9" /></svg>
        <span className="ml-[9px] text-[14px]"><Fit w={128}>Type here to search</Fit></span>
        <svg className="ml-auto" width="12" height="17" viewBox="0 0 12 17" fill="none" stroke="#333" strokeWidth="1.200"><rect x="3.500" y=".6" width="5" height="10" rx=".5" /><path d="M.8 7.500v3q0 3 3 3h4.400q3 0 3-3v-3M6 13.500v3M3.500 16.400h5" /></svg>
      </div>
      <div className="flex pl-px">
        {apps.map((a, i) => (
          <div key={i} className={"relative flex h-10 w-[49px] items-center justify-center " + (a.bg ?? "")}>
            {a.icon}
            {a.bar && <i className={"absolute bottom-0 h-[2px] bg-[#b5b1b5] " + a.bar} />}
          </div>
        ))}
      </div>
      <div className="ml-auto flex items-center text-[12px]">
        <svg width="15" height="16" viewBox="0 0 15 16" fill="none" stroke="#fff" strokeWidth="1.200"><circle cx="4.500" cy="8" r="2.700" /><path d="M.6 15.500q.4-4.500 4-4.500t4 4.500" /><circle cx="10.500" cy="3.300" r="2.700" /><path d="M8.500 7q5-1.500 5.800 3.500" /></svg>
        <svg className="ml-[22px]" width="13" height="8" viewBox="0 0 13 8" fill="none" stroke="#fff" strokeWidth="1.200"><path d="M.8 7l5.700-6 5.700 6" /></svg>
        <svg className="ml-[10px]" width="16" height="16" viewBox="0 0 16 16"><rect width="16" height="16" fill="#e99f9f" /><rect x="1.500" y="1.500" width="13" height="13" fill="#f7e6e6" /><path d="M4 3.500L8 12l4-8.500" fill="none" stroke="#d22a2a" strokeWidth="2" /></svg>
        <svg className="ml-[8px]" width="17" height="15" viewBox="0 0 17 15" fill="none" stroke="#fff" strokeWidth="1.100"><path d="M4.500 2.500h12v8h-12V6M10.500 10.500v3.500M6 14h9M.5.600h4v4h-4zM2.500 4.500V14H6" /></svg>
        <span className="ml-[9px]"><Fit w={24}>ENG</Fit></span>
        <div className="ml-3 flex flex-col items-center leading-[18px]"><Fit w={43}>2:50 PM</Fit><Fit w={59}>05/06/2018</Fit></div>
        <svg className="ml-[17px] mr-[10px] mt-[4px]" width="27" height="26" viewBox="0 0 27 26"><path d="M0 2h16v12H8l-3 3v-3H0z" fill="#fff" /><path d="M3 5.500h10M3 8.500h10M3 11.500h6" stroke="#14242b" strokeWidth="1.100" /><rect x="5.500" y="9.500" width="19" height="15" rx="7.500" fill="#283136" stroke="#9a9a9a" /><text x="15" y="21.500" textAnchor="middle" fontSize="12" fill="#fff" fontFamily="Open Sans" fontWeight="600">22</text></svg>
        <i className="mr-[3px] h-10 w-px bg-[#4d585d]" />
      </div>
    </div>
  );
}

function ChatTab() {
  return (
    <div className="absolute left-[1667px] top-[1010px] z-20 flex h-[30px] w-[226px] items-center rounded-t-[4px] border-t border-[#6a94c2] bg-gradient-to-b from-[#2068b9] to-[#1b5799] pb-px pl-[10px] font-['Noto_Sans',sans-serif] text-[12.500px] text-white">
      <svg width="16" height="12" viewBox="0 0 16 12"><rect width="16" height="12" rx="1" fill="#e8964a" /><path d="M0 .5l8 7 8-7" fill="none" stroke="#1f63ae" strokeWidth="2" /></svg>
      <b className="ml-[10px]"><Fit w={45}>Offline</Fit></b>
      <span className="ml-[4px] font-medium"><Fit w={131}>– Nhấp chuột vào đây</Fit></span>
    </div>
  );
}

export default function App() {
  return (
    <div className={"relative flex h-[1080px] w-[1920px] flex-col overflow-hidden bg-white " + ui}>
      <WindowTabs />
      <AddressBar />
      <BookmarkBar />
      <Page />
      <Taskbar />

      <Watermark cls="left-[1057px] top-[147px]" />
      <Watermark cls="left-[759px] top-[426px]" />
      <Watermark cls="left-[450px] top-[727px]" />
      <div className="absolute left-[974px] top-[800px] z-20 font-['Liberation_Sans',sans-serif] text-[31px] font-bold leading-none text-[#ff3399]"><Fit w={326}>www.qhonline.edu.vn</Fit></div>
      <div className="absolute left-[902px] top-[493px] z-30 flex h-20 w-20 justify-center gap-3 rounded-[3px] bg-black/75 pt-[13px]">
        <i className="h-[54px] w-[12px] rounded-[3px] bg-[#fdfdfd]" /><i className="h-[54px] w-[12px] rounded-[3px] bg-[#fdfdfd]" />
      </div>
      <div className="absolute left-[1231px] top-[448px] z-20 h-14 w-14 rounded-full bg-[#ffffa3] mix-blend-multiply" />
      <svg className="absolute left-[1251px] top-[459px] z-30" width="20" height="32" viewBox="0 0 20 32"><path d="M1.500 1.500v23l5.500-5.500 4.500 10 2.500.5 1.500-2-4.500-9H18.500z" fill="#fff" stroke="#000" strokeWidth="1.100" /></svg>
      <i className="absolute left-[1859px] top-[999px] z-10 h-3 w-[30px] rounded-t-[2px] bg-[#242424]" />
      <ChatTab />
    </div>
  );
}
